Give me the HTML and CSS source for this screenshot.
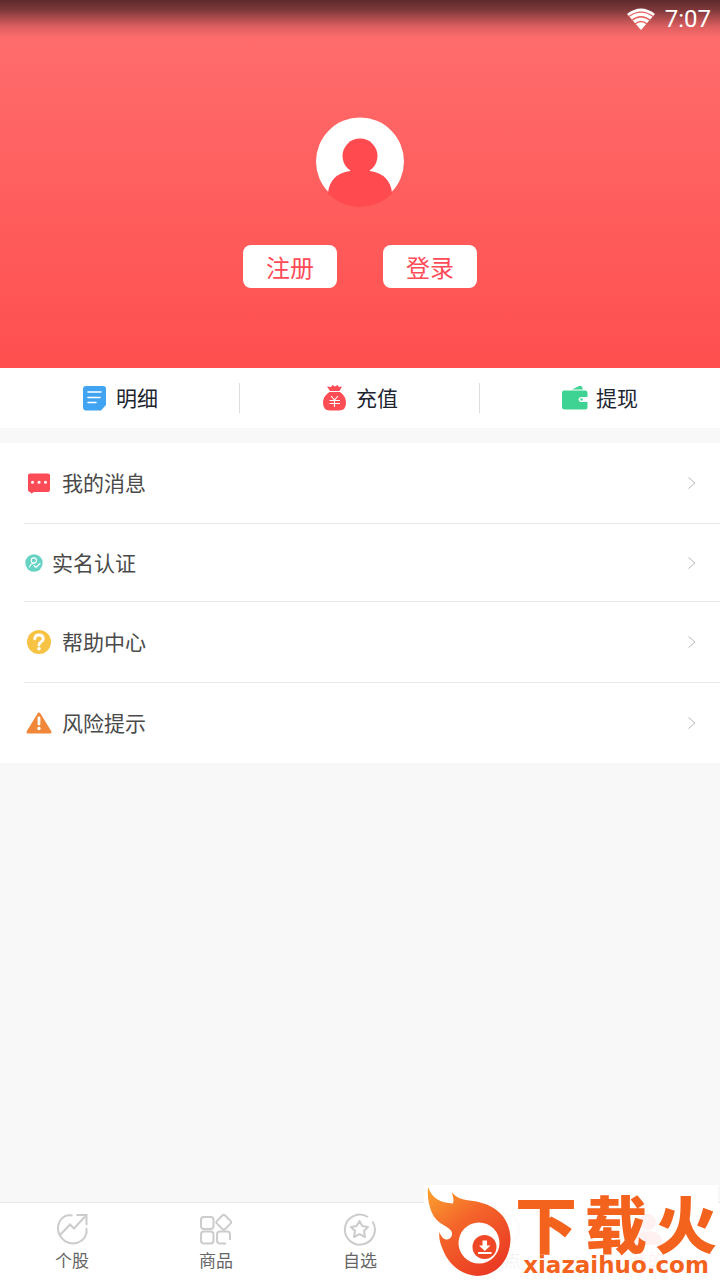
FILE: index.html
```
<!DOCTYPE html>
<html lang="zh-CN">
<head>
<meta charset="utf-8">
<meta name="viewport" content="width=device-width, initial-scale=1">
<title>我的</title>
<link rel="stylesheet" href="styles.css">
</head>
<body>
<div class="app">
  <header class="profile">
    <div class="status">
      <svg class="wifi" viewBox="0 0 30 22" aria-hidden="true">
        <path fill="#fff" d="M15 22 1 6Q15-5 29 6Z"/>
        <path fill="none" stroke="#e86060" stroke-width="1.300" d="M2.500 8.700Q15-.500 27.500 8.700M5.500 12.500Q15 5 24.500 12.500M9 16Q15 11 21 16"/>
      </svg>
      <span>7:07</span>
    </div>
    <svg class="avatar" viewBox="0 0 90 90" aria-hidden="true">
      <defs><clipPath id="face"><circle cx="45" cy="45" r="45"/></clipPath></defs>
      <circle cx="45" cy="44.500" r="44" fill="#fff"/>
      <g clip-path="url(#face)" fill="#ff4b50">
        <circle cx="45" cy="39" r="17.500"/>
        <path d="M13 90V76Q15 57 35 54L37 52H53L55 54Q75 57 77 76V90Z"/>
      </g>
    </svg>
    <div class="auth">
      <button class="auth-btn" type="button">注册</button>
      <button class="auth-btn" type="button">登录</button>
    </div>
  </header>

  <nav class="actions">
    <a class="action" href="#detail">
      <svg class="action-icon" viewBox="0 0 26 26" aria-hidden="true">
        <path fill="#41a4f2" d="M4 1H21Q24 1 24 4V20L19 25.500H4Q1 25.500 1 22V4Q1 1 4 1Z"/>
        <path stroke="#fff" stroke-width="1.600" stroke-linecap="round" d="M6 7H19M6 12.500H18M6 17.500H14"/>
      </svg>
      <span>明细</span>
    </a>
    <a class="action" href="#recharge">
      <svg class="action-icon" viewBox="0 0 26 26" aria-hidden="true">
        <path fill="#ff4d55" d="M8 6 5 1.500 9 2 10.500 0 13 1.500 15.500 0 17 2 20 1.500 17.500 6ZM7.500 7H18Q24 11 24 18 24 25.500 17 25.500H8Q1 25.500 1 18 1 11 7.500 7Z"/>
        <path fill="none" stroke="#fff" stroke-width="1.100" d="M9 11 12.500 15 16 11M7.500 15.500H18M7.500 18.500H18M12.500 15V22"/>
      </svg>
      <span>充值</span>
    </a>
    <a class="action" href="#withdraw">
      <svg class="action-icon" viewBox="0 0 26 26" aria-hidden="true">
        <path fill="#3fd393" d="M10 4.500 17 1Q19 0 20 2L21 4.500ZM2 5.500H23Q25.500 5.500 25.500 8V12H19Q16.500 12.500 16.500 14.500T19 17H25.500V22Q25.500 24.500 23 24.500H3Q0 24.500 0 22V7.500Q0 5.500 2 5.500Z"/>
        <circle cx="19.500" cy="14.500" r="1.200" fill="#3fd393"/>
      </svg>
      <span>提现</span>
    </a>
  </nav>

  <main class="menu">
    <a class="row" href="#messages">
      <svg class="row-icon" viewBox="0 0 26 26" aria-hidden="true">
        <path fill="#fa4b57" d="M4 3.500H22Q24 3.500 24 5.500V20Q24 22 22 22H8L5.500 23.500 4 22Q2 22 2 20V5.500Q2 3.500 4 3.500Z"/>
        <g fill="#fff"><circle cx="6.500" cy="12.300" r="1.500"/><circle cx="13" cy="12.300" r="1.500"/><circle cx="19.500" cy="12.300" r="1.500"/></g>
      </svg>
      <span class="label">我的消息</span>
      <svg class="arrow" viewBox="0 0 8 12" aria-hidden="true"><path d="M.500.500 7 6 .500 11.500"/></svg>
    </a>
    <a class="row row-short" href="#identity">
      <svg class="row-icon row-icon-small" viewBox="0 0 18 18" aria-hidden="true">
        <circle cx="9" cy="9" r="8.700" fill="#67d3c4"/>
        <g fill="none" stroke="#fff" stroke-width="1.100" stroke-linecap="round"><circle cx="8.800" cy="6.500" r="2.600"/><path d="M4.700 13Q5.500 9.500 8.500 9.500M9 11.500 11 13.500 15 9.500"/></g>
      </svg>
      <span class="label">实名认证</span>
      <svg class="arrow" viewBox="0 0 8 12" aria-hidden="true"><path d="M.500.500 7 6 .500 11.500"/></svg>
    </a>
    <a class="row" href="#help">
      <svg class="row-icon" viewBox="0 0 26 26" aria-hidden="true">
        <circle cx="13" cy="13" r="12" fill="#f6c344"/>
        <path fill="none" stroke="#fff" stroke-width="2.800" stroke-linecap="round" d="M8.800 9.800Q9 6 13 6T17.300 9.800Q17.300 11.800 15 13 13 14 13 16"/>
        <circle cx="13" cy="19.800" r="1.800" fill="#fff"/>
      </svg>
      <span class="label">帮助中心</span>
      <svg class="arrow" viewBox="0 0 8 12" aria-hidden="true"><path d="M.500.500 7 6 .500 11.500"/></svg>
    </a>
    <a class="row" href="#risk">
      <svg class="row-icon" viewBox="0 0 26 26" aria-hidden="true">
        <path fill="#f08739" stroke="#f08739" stroke-width="3" stroke-linejoin="round" d="M13 4 24 22H2Z"/>
        <path stroke="#fff" stroke-width="2.800" stroke-linecap="round" d="M13 8V14"/>
        <circle cx="13" cy="18.500" r="1.700" fill="#fff"/>
      </svg>
      <span class="label">风险提示</span>
      <svg class="arrow" viewBox="0 0 8 12" aria-hidden="true"><path d="M.500.500 7 6 .500 11.500"/></svg>
    </a>
  </main>

  <footer class="bottom">
    <nav class="tabs">
      <a class="tab" href="#stocks">
        <svg class="tab-icon" viewBox="0 0 34 34" aria-hidden="true"><path d="M17.500 3.500Q10 2 5.500 8 1 15 4.500 23 9 31 17.500 31.500 29 31 31.500 21V16M5 23 15 12.500 19 16.500 30 4.500M21.500 3H31.500V13"/></svg>
        <span>个股</span>
      </a>
      <a class="tab" href="#goods">
        <svg class="tab-icon" viewBox="0 0 34 34" aria-hidden="true"><rect x="2" y="5" width="12.500" height="12" rx="3"/><rect x="2" y="19.500" width="12.500" height="12" rx="3"/><rect x="19" y="4.500" width="11.500" height="11.500" rx="2" transform="rotate(45 24.750 10.250)"/><path d="M27 31.500H21Q18 31.500 18 28.500V22.500Q18 19.500 21 19.500H28Q31 19.500 31 22.500V28"/></svg>
        <span>商品</span>
      </a>
      <a class="tab" href="#favorites">
        <svg class="tab-icon" viewBox="0 0 34 34" aria-hidden="true"><path d="M25 5A15 15 0 1 0 29.500 9.500" /><path stroke-linejoin="round" d="M16.500 9 19.300 14 25 15 21 19 22 25 16.500 22.200 11 25 12 19 8 15 13.700 14Z"/></svg>
        <span>自选</span>
      </a>
      <a class="tab" href="#hot">
        <svg class="tab-icon" viewBox="0 0 34 34" aria-hidden="true"><circle cx="17" cy="17" r="15"/></svg>
        <span>热点</span>
      </a>
      <a class="tab tab-active" href="#me">
        <svg class="tab-icon" viewBox="0 0 34 34" aria-hidden="true"><circle cx="17" cy="10" r="8"/><path d="M2 33Q3 19 17 19T32 33Z"/></svg>
        <span>我的</span>
      </a>
    </nav>
    <div class="brand">
      <svg class="flame" viewBox="424 1185 90 95" aria-hidden="true">
        <defs><linearGradient id="fire" x1="0" y1="0" x2=".7" y2="1"><stop offset="0" stop-color="#fba52f"/><stop offset=".45" stop-color="#f4652a"/><stop offset="1" stop-color="#ea3b24"/></linearGradient></defs>
        <path fill="url(#fire)" d="M428 1187C432 1198 440 1203 453 1203.500 454 1200 453 1196 451.700 1192 456 1198 463 1200 473 1201 495 1204 510 1217 510.500 1239 510 1262 495 1276 477 1276 460 1275 448 1263 443 1250 440 1243 438.500 1237 439.500 1232 441 1237 444 1239.500 447 1239.500 452 1239 453.500 1233 450.500 1230 446 1225 437 1224 432 1213 429 1206 427 1197 428 1187Z"/>
        <circle cx="479" cy="1243" r="20.500" fill="#fff"/>
        <circle cx="484.500" cy="1247" r="12" fill="#ee4826"/>
        <path fill="#fff" d="M482.500 1240.500H487V1245.500H490.500L484.800 1251 479 1245.500H482.500ZM478 1252H491.500V1254H478Z"/>
      </svg>
      <div class="brand-text">
        <div class="brand-name"><span>下</span><span>载</span><span>火</span></div>
        <div class="brand-url">xiazaihuo.com</div>
      </div>
    </div>
  </footer>
</div>
</body>
</html>
```
FILE: styles.css
```
* {
  box-sizing: border-box;
}

body {
  margin: 0;
  background: #f8f8f8;
  color: #4a4a4a;
  font-family: "Noto Sans CJK SC", sans-serif;
}

a {
  color: inherit;
  text-decoration: none;
}

svg {
  display: block;
  flex: none;
}

.app {
  display: flex;
  flex-direction: column;
  min-height: 100vh;
}

.profile {
  display: flex;
  flex-direction: column;
  align-items: center;
  padding-bottom: 80px;
  background:
    linear-gradient(rgba(40, 20, 24, 0.75), rgba(40, 20, 24, 0.6) 10px, rgba(40, 20, 24, 0.15) 27px, rgba(40, 20, 24, 0) 38px),
    linear-gradient(#ff6f6f, #ff4f4f);
}

.status {
  display: flex;
  align-self: stretch;
  align-items: center;
  justify-content: flex-end;
  gap: 9px;
  height: 38px;
  padding-right: 9px;
  color: #fff;
  font-family: Roboto, sans-serif;
  font-size: 24px;
}

.wifi {
  width: 30px;
  height: 22px;
}

.avatar {
  width: 90px;
  height: 90px;
  margin-top: 79px;
}

.auth {
  display: flex;
  gap: 46px;
  margin-top: 38px;
}

.auth-btn {
  width: 94px;
  height: 43px;
  padding: 0;
  border: 0;
  border-radius: 8px;
  background: #fff;
  color: #ff4b57;
  font-family: inherit;
  font-size: 24px;
  line-height: 42px;
}

.actions {
  display: flex;
  height: 60px;
  background: #fff;
  color: #1d2530;
}

.action {
  display: flex;
  flex: 1;
  align-items: center;
  justify-content: center;
  gap: 8px;
  font-size: 21px;
}

.action span,
.label {
  padding-bottom: 2px;
}

.action:not(:last-child) {
  background: linear-gradient(#ddd, #ddd) right center / 1px 30px no-repeat;
}

.action-icon {
  width: 26px;
  height: 26px;
}

.menu {
  margin-top: 15px;
  padding-left: 24px;
  background: #fff;
}

.row {
  display: flex;
  align-items: center;
  gap: 10px;
  height: 81px;
  padding: 0 24px 0 2px;
  border-bottom: 1px solid #e8e8e8;
}

.row:last-child {
  height: 80px;
  border-bottom: 0;
}

.row-short {
  height: 78px;
  padding-left: 1px;
  gap: 9px;
}

.row-icon {
  width: 26px;
  height: 26px;
}

.row-icon-small {
  width: 18px;
  height: 18px;
}

.label {
  flex: 1;
  font-size: 21px;
}

.arrow {
  width: 8px;
  height: 12px;
  fill: none;
  stroke: #b8b8b8;
}

.bottom {
  position: relative;
  margin-top: auto;
}

.tabs {
  display: flex;
  height: 78px;
  border-top: 1px solid #e8e8e8;
  background: #fff;
}

.tab {
  display: flex;
  flex: 1;
  flex-direction: column;
  align-items: center;
  gap: 2px;
  padding-top: 9px;
  color: #666;
  font-size: 17px;
  line-height: 24px;
}

.tab-icon {
  width: 34px;
  height: 34px;
  fill: none;
  stroke: #ccc;
  stroke-width: 2;
}

.tab-active {
  color: #ff4b50;
}

.tab-active .tab-icon {
  fill: #ff4b50;
  stroke: none;
}

.brand {
  position: absolute;
  right: 2px;
  bottom: 0;
  display: flex;
  width: 294px;
  height: 95px;
  background: rgba(255, 255, 255, 0.92);
  color: #f4631e;
}

.flame {
  width: 90px;
  height: 95px;
}

.brand-text {
  display: flex;
  flex: 1;
  flex-direction: column;
  align-items: center;
  gap: 2px;
  padding-top: 8px;
}

.brand-name {
  display: flex;
  gap: 8px;
  font-size: 62px;
  font-weight: 900;
  line-height: 58px;
}

.brand-url {
  font-family: "DejaVu Sans", sans-serif;
  font-size: 23px;
  font-weight: 700;
  line-height: 24px;
}
```
